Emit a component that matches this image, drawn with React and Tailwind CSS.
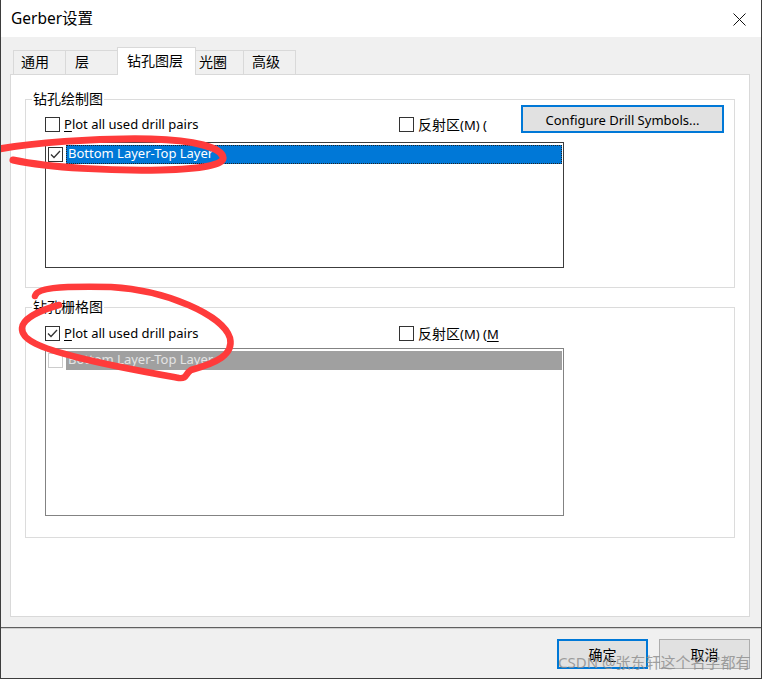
import React from "react";

const FONT = "font-['Noto_Sans','Noto_Sans_CJK_SC',sans-serif]";

function Check({ checked, light }) {
  return (
    <span
      className={`flex w-[15px] h-[15px] shrink-0 items-center justify-center bg-white border ${
        light ? "border-[#cccccc]" : "border-[#333333]"
      }`}
    >
      {checked && (
        <svg width="13" height="13" viewBox="0 0 13 13">
          <polyline
            points="2,6.5 5,9.5 11,3"
            fill="none"
            stroke="#333333"
            strokeWidth="1.3"
          />
        </svg>
      )}
    </span>
  );
}

function Tab({ label, w, pl, selected }) {
  return (
    <div
      className={`${w} ${pl} -ml-px first:ml-0 border-t border-l border-r border-[#d9d9d9] flex items-center text-[14px] text-black ${
        selected
          ? "h-[28px] bg-white relative z-10 mb-[-1px] pb-[3px]"
          : "h-[24px] bg-[#f0f0f0] pb-[2px]"
      }`}
    >
      {label}
    </div>
  );
}

function Group({ label, h, className = "", children }) {
  return (
    <div
      className={`relative w-[710px] ${h} border border-[#dcdcdc] ${className}`}
    >
      <span className="absolute left-[6px] top-[-11px] bg-white px-[1px] text-[14px] leading-[20px] text-black">
        {label}
      </span>
      {children}
    </div>
  );
}

function Mirror({ underline }) {
  return (
    <div className="flex items-center gap-[4px] h-[15px]">
      <Check />
      <span className="text-[13px] leading-[15px] text-black whitespace-nowrap">
        <span className="text-[14px]">反射区</span>(M) (
        {underline && <span className="underline underline-offset-2">M</span>}
      </span>
    </div>
  );
}

function PlotAll({ checked }) {
  return (
    <div className="flex items-center gap-[4px] h-[15px]">
      <Check checked={checked} />
      <span className="text-[13px] leading-[15px] text-black whitespace-nowrap">
        <span className="underline underline-offset-2">P</span>lot all used drill
        pairs
      </span>
    </div>
  );
}

export default function App() {
  return (
    <div
      className={`relative w-[762px] h-[679px] overflow-hidden bg-[#f0f0f0] border-l border-r border-b border-[#3d3d3d] flex flex-col ${FONT}`}
    >
      {/* title bar */}
      <div className="h-[37px] shrink-0 bg-white flex items-center justify-between pl-[10px] pr-[15px]">
        <span className="text-[15.5px] text-black leading-none">Gerber设置</span>
        <svg width="13" height="13" viewBox="0 0 13 13" className="mt-[1px]">
          <path d="M0.5 0.5 L12.5 12.5 M12.5 0.5 L0.5 12.5" stroke="#111" strokeWidth="1" />
        </svg>
      </div>

      {/* body */}
      <div className="h-[590px] shrink-0 pl-[9px] pt-[10px]">
        <div className="flex items-end h-[27px] pl-[3px]">
          <Tab label="通用" w="w-[53px]" pl="pl-[7px]" />
          <Tab label="层" w="w-[53px]" pl="pl-[9px]" />
          <Tab label="钻孔图层" w="w-[79px]" pl="pl-[9px]" selected />
          <Tab label="光圈" w="w-[49px]" pl="pl-[3px]" />
          <Tab label="高级" w="w-[53px]" pl="pl-[8px]" />
        </div>
        <div className="w-[740px] h-[543px] bg-white border border-[#d9d9d9] pl-[14px] pt-[24px]">
          <Group label="钻孔绘制图" h="h-[189px]">
            <div className="flex items-start">
              <div className="ml-[19px] mt-[17px] w-[354px]">
                <PlotAll />
              </div>
              <div className="mt-[17px] w-[122px]">
                <Mirror />
              </div>
              <button className="mt-[5px] w-[203px] h-[28px] border-2 border-[#0078d7] bg-[#e1e1e1] text-[13px] leading-[15px] text-black flex items-center justify-center pt-[2px]">
                Configure Drill Symbols...
              </button>
            </div>
            <div className="ml-[19px] mt-[9px] w-[519px] h-[126px] border border-[#3c3c3c] bg-white pt-[1px]">
              <div className="flex items-center h-[20px] pl-[2px] pr-[1px]">
                <Check checked />
                <div className="ml-[3px] flex-1 h-[19px] bg-[#0078d7] border border-dotted border-[#222] flex items-center pl-[1px] text-[13px] text-white">
                  Bottom Layer-Top Layer
                </div>
              </div>
            </div>
          </Group>

          <Group label="钻孔栅格图" h="h-[231px]" className="mt-[19px]">
            <div className="flex items-start">
              <div className="ml-[19px] mt-[18px] w-[354px]">
                <PlotAll checked />
              </div>
              <div className="mt-[18px]">
                <Mirror underline />
              </div>
            </div>
            <div className="ml-[19px] mt-[7px] w-[519px] h-[168px] border border-[#838383] bg-white pt-[1px]">
              <div className="flex items-center h-[20px] pl-[2px] pr-[1px]">
                <Check light />
                <div className="ml-[3px] flex-1 h-[19px] bg-[#a0a0a0] flex items-center pl-[2px] text-[13px] text-[#e4e4e4]">
                  Bottom Layer-Top Layer
                </div>
              </div>
            </div>
          </Group>
        </div>
      </div>

      {/* separator */}
      <div className="h-px shrink-0 bg-[#5f5f5f]" />
      <div className="h-px shrink-0 bg-[#cfcfcf]" />

      {/* footer */}
      <div className="flex-1 flex justify-end items-start gap-[11px] pr-[11px] pt-[10px]">
        <button className="w-[91px] h-[30px] border-2 border-[#0078d7] bg-[#e1e1e1] text-[14px] text-black flex items-center justify-center">
          确定
        </button>
        <button className="w-[91px] h-[30px] border border-[#adadad] bg-[#e1e1e1] text-[14px] text-black flex items-center justify-center">
          取消
        </button>
      </div>

      {/* watermark */}
      <div className="absolute left-[557px] top-[651px] text-[15px] leading-[22px] text-[#8c8c8c] opacity-80 whitespace-nowrap pointer-events-none">
        CSDN @张东轩这个名字都有
      </div>

      {/* red annotations */}
      <svg
        className="absolute left-0 top-0 pointer-events-none"
        width="762"
        height="679"
        viewBox="0 0 762 679"
      >
        <path
          d="M-2,149 C30,143 90,138 150,139 C195,140 220,148 222,157 C224,165 200,169 160,170 C110,171 50,168 12,160"
          fill="none"
          stroke="#ff3b3b"
          strokeWidth="7"
          strokeLinecap="round"
          strokeLinejoin="round"
        />
        <path
          d="M34,296 C36,288 55,286 110,287 C165,290 222,315 229,338 C233,355 215,363 190,370 C184,374 186,379 178,378 C150,373 110,366 75,357 C40,348 20,340 21,328 C22,318 40,310 58,305"
          fill="none"
          stroke="#ff3b3b"
          strokeWidth="6.5"
          strokeLinecap="round"
          strokeLinejoin="round"
        />
      </svg>
    </div>
  );
}
